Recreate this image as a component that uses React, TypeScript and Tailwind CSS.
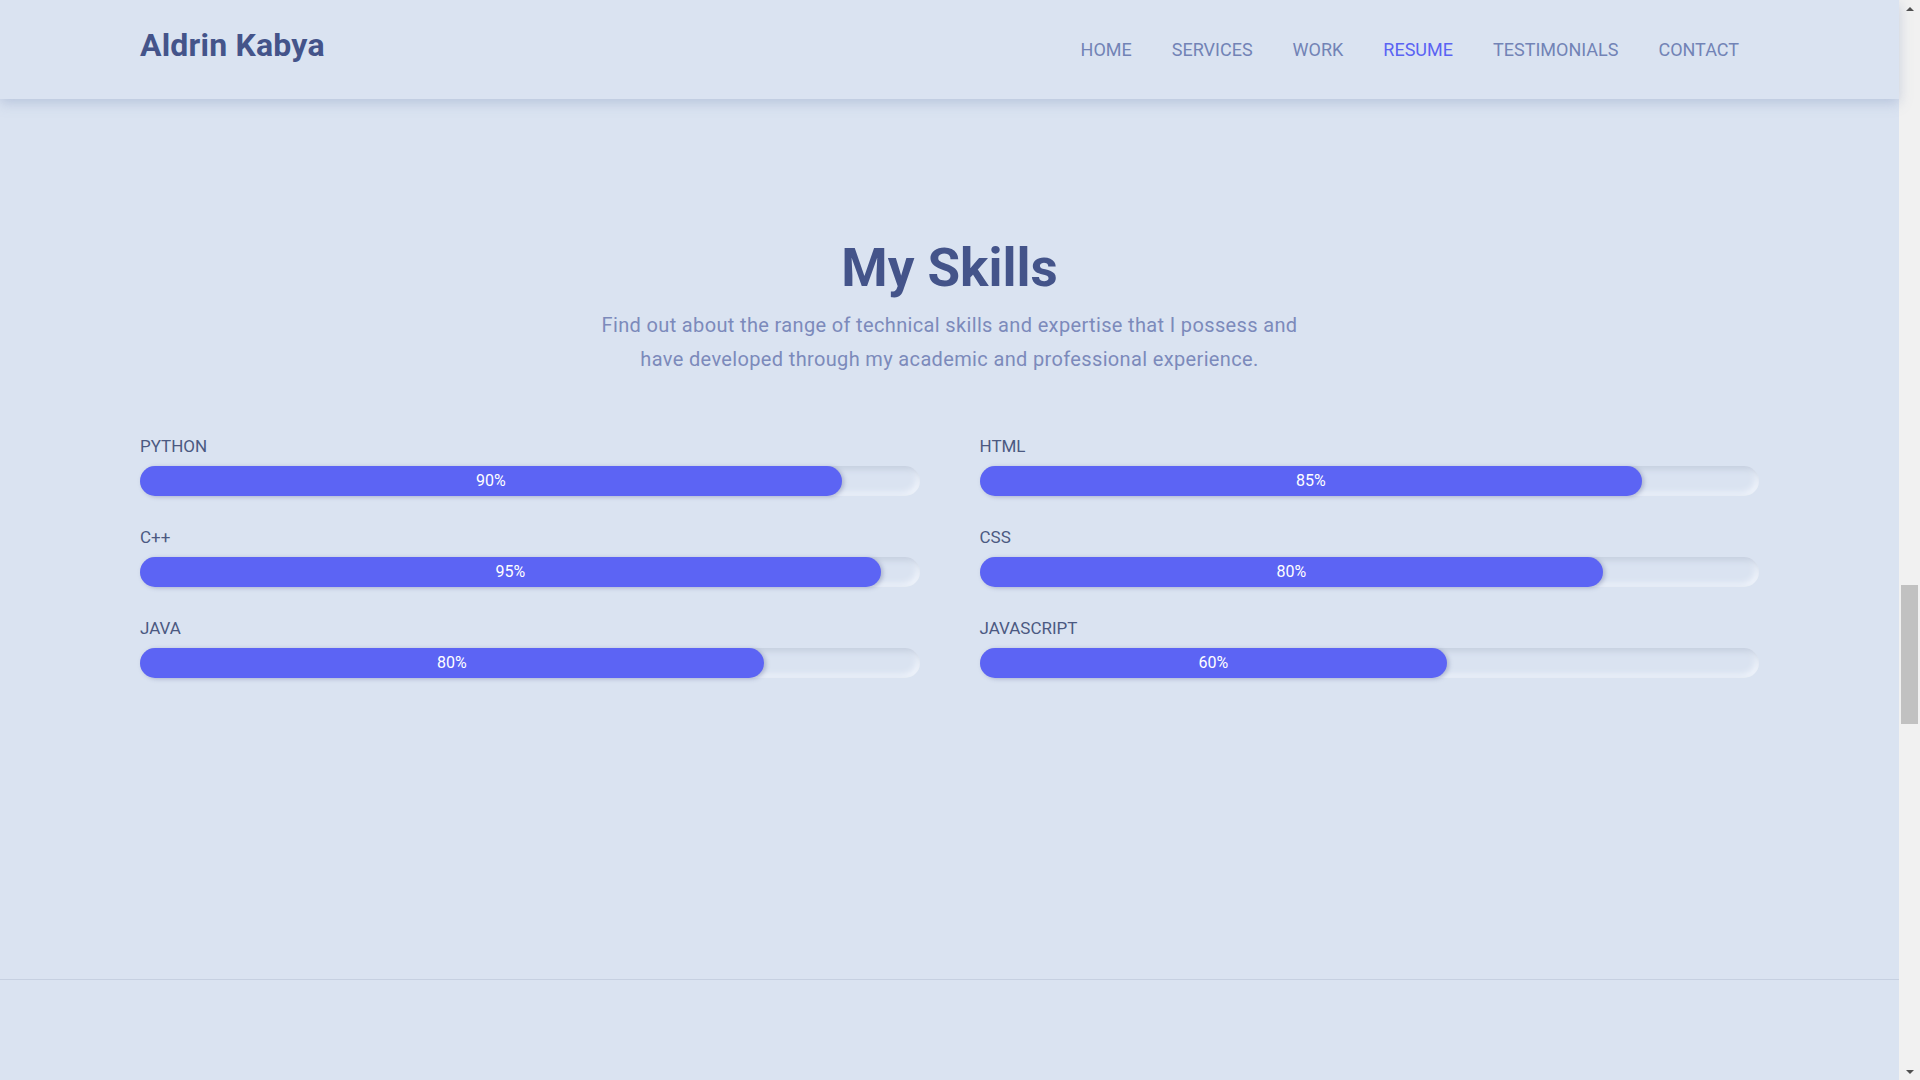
import React from "react";

const skillsLeft = [
  { name: "PYTHON", value: 90 },
  { name: "C++", value: 95 },
  { name: "JAVA", value: 80 },
];
const skillsRight = [
  { name: "HTML", value: 85 },
  { name: "CSS", value: 80 },
  { name: "JAVASCRIPT", value: 60 },
];

const navItems = ["HOME", "SERVICES", "WORK", "RESUME", "TESTIMONIALS", "CONTACT"];

function SkillBar({ name, value }: { name: string; value: number }) {
  return (
    <div className="flex flex-col">
      <div className="text-[17px] leading-[24px] text-[#4b5981] mb-[8px]">{name}</div>
      <div className="h-[30px] w-full rounded-full bg-[#dae3f1] shadow-[inset_3px_3px_6px_#c3cddd,inset_-3px_-3px_6px_#f1f5fc]">
        <div
          className="h-full rounded-full bg-[#5c64f4] flex items-center justify-center text-white text-[16px] shadow-[2px_1px_4px_rgba(80,90,140,0.35)]"
          style={{ width: `${value}%` }}
        >
          {value}%
        </div>
      </div>
    </div>
  );
}

export default function App() {
  return (
    <div className="flex h-screen w-full overflow-hidden" style={{ fontFamily: "Roboto, 'Noto Sans', sans-serif" }}>
      <div className="flex-1 flex flex-col bg-[#dae3f1]">
        <header className="relative z-10 h-[99px] shrink-0 flex items-center justify-between pl-[140px] pr-[140px] bg-[#dae3f1] shadow-[0_4px_12px_rgba(120,140,180,0.35)]">
          <div className="text-[32px] font-bold text-[#44548a] -mt-[10px] tracking-[0.2px]">Aldrin Kabya</div>
          <nav className="flex items-center">
            {navItems.map((n) => (
              <a
                key={n}
                className={`px-[20px] text-[18px] ${n === "RESUME" ? "text-[#5b63f3]" : "text-[#7283b6]"}`}
              >
                {n}
              </a>
            ))}
          </nav>
        </header>
        <section className="flex flex-col items-center pt-[136px] pb-[301px] px-[140px] border-b border-[#c6d0e1]">
          <h2 className="text-[53px] leading-[67px] font-bold text-[#44548a]">My Skills</h2>
          <p className="mt-[6px] text-center text-[20px] tracking-[0.35px] leading-[34px] text-[#7c8abb]">
            Find out about the range of technical skills and expertise that I possess and
            <br />
            have developed through my academic and professional experience.
          </p>
          <div className="mt-[58px] w-full grid grid-cols-2 gap-x-[60px]">
            <div className="flex flex-col gap-[29px]">
              {skillsLeft.map((s) => (
                <SkillBar key={s.name} {...s} />
              ))}
            </div>
            <div className="flex flex-col gap-[29px]">
              {skillsRight.map((s) => (
                <SkillBar key={s.name} {...s} />
              ))}
            </div>
          </div>
        </section>
        <div className="flex-1" />
      </div>
      <div className="w-[21px] shrink-0 bg-[#f1f1f1] flex flex-col items-center">
        <div className="h-[17px] w-full flex items-center justify-center">
          <div className="w-0 h-0 border-l-[4px] border-r-[4px] border-b-[4px] border-l-transparent border-r-transparent border-b-[#505050]" />
        </div>
        <div className="mt-[568px] h-[139px] w-[17px] bg-[#c1c1c1]" />
        <div className="flex-1" />
        <div className="h-[17px] w-full flex items-center justify-center">
          <div className="w-0 h-0 border-l-[4px] border-r-[4px] border-t-[4px] border-l-transparent border-r-transparent border-t-[#505050]" />
        </div>
      </div>
    </div>
  );
}
